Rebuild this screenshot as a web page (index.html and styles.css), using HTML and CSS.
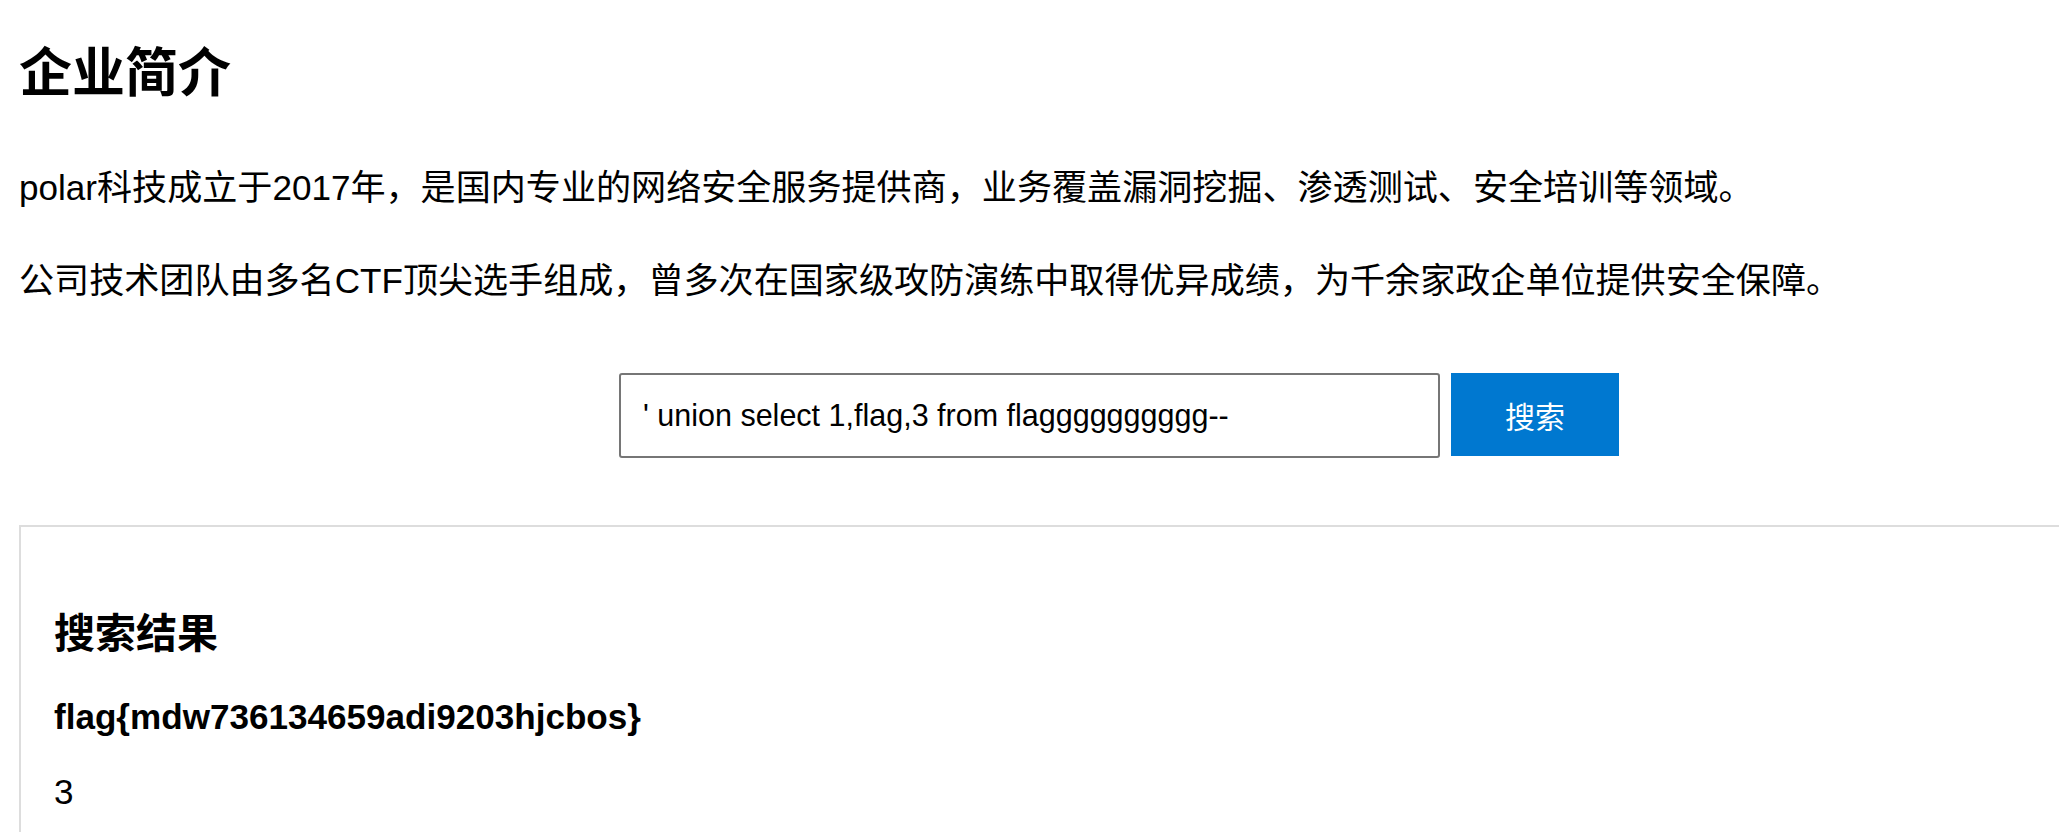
FILE: index.html
```html
<!DOCTYPE html>
<html lang="zh-CN">
  <head>
    <meta charset="UTF-8" />
    <meta name="viewport" content="width=device-width, initial-scale=1.0" />
    <title>企业简介</title>
    <link rel="stylesheet" href="styles.css">
  </head>
  <body>
    <div class="page">
      <h1>企业简介</h1>
      <p>polar科技成立于2017年，是国内专业的网络安全服务提供商，业务覆盖漏洞挖掘、渗透测试、安全培训等领域。</p>
      <p>公司技术团队由多名CTF顶尖选手组成，曾多次在国家级攻防演练中取得优异成绩，为千余家政企单位提供安全保障。</p>

      <form class="search-form" action="#" method="get">
        <input type="text" name="id" class="search-input" value="' union select 1,flag,3 from flagggggggggg--" />
        <button type="submit" class="search-btn">搜索</button>
      </form>

      <div class="results">
        <h3>搜索结果</h3>
        <p class="result-title">flag{mdw736134659adi9203hjcbos}</p>
        <p class="result-text">3</p>
      </div>
    </div>
  </body>
</html>
```

FILE: styles.css
```css
* {
  box-sizing: border-box;
}

body {
  margin: 0;
  font-family: "Liberation Sans", "Noto Sans CJK SC", sans-serif;
  font-size: 35.1px;
  color: #000;
  background-color: #fff;
  overflow: hidden;
}

.page {
  width: 2219px;
  padding-left: 19px;
}

.page h1 {
  font-size: 53px;
  font-weight: 700;
  line-height: 72px;
  margin: 38px 0 50px;
}

.page p {
  line-height: 56px;
  margin: 0 0 37px;
}

.search-form {
  display: flex;
  justify-content: center;
  align-items: flex-start;
  gap: 11px;
  margin-top: 64px;
}

.search-input {
  width: 821px;
  height: 85px;
  padding: 0 22px;
  border: 2px solid #767676;
  border-radius: 3px;
  font-family: inherit;
  font-size: 30.5px;
  color: #000;
  outline: none;
}

.search-btn {
  width: 168px;
  height: 83px;
  border: none;
  background-color: #0078d0;
  color: #fff;
  font-family: inherit;
  font-size: 30px;
  cursor: pointer;
}

.results {
  margin-top: 67px;
  padding: 34px 33px;
  border: 2px solid #ddd;
}

.results h3 {
  font-size: 41px;
  font-weight: 700;
  line-height: 56px;
  margin: 45px 0 27px;
}

.results p {
  margin: 0 0 19px;
}

.results .result-title {
  font-weight: 700;
}
```
